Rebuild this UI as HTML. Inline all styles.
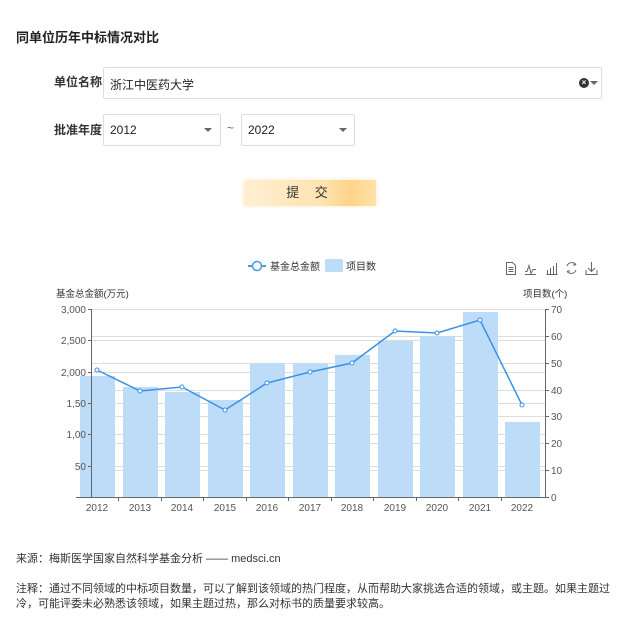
<!DOCTYPE html>
<html><head><meta charset="utf-8">
<style>
*{margin:0;padding:0;box-sizing:border-box}
body{width:623px;height:626px;background:#fff;font-family:"Liberation Sans","Noto Sans CJK SC",sans-serif;color:#333;position:relative;overflow:hidden}
.a{position:absolute}
.box{position:absolute;border:1px solid #ddd;border-radius:2px;background:#fff;font-size:12px;color:#222}
.lbl{position:absolute;font-size:12px;font-weight:bold;color:#333}
.tri{position:absolute;width:0;height:0;border-left:4px solid transparent;border-right:4px solid transparent;border-top:4px solid #666}
</style></head><body>
<div class="a" style="left:16px;top:27px;font-size:13px;font-weight:bold;color:#222">同单位历年中标情况对比</div>

<div class="lbl" style="left:54px;top:73px">单位名称</div>
<div class="box" style="left:103px;top:67px;width:499px;height:32px"><span class="a" style="left:6px;top:8px">浙江中医药大学</span>
<span class="a" style="left:475px;top:10px;width:10px;height:10px;border-radius:50%;background:#333;color:#fff;font-size:8px;line-height:10px;text-align:center;font-weight:bold">×</span>
<span class="tri" style="left:486px;top:13px"></span></div>

<div class="lbl" style="left:54px;top:121px">批准年度</div>
<div class="box" style="left:103px;top:114px;width:118px;height:32px"><span class="a" style="left:6px;top:8px">2012</span><span class="tri" style="left:100px;top:13px"></span></div>
<div class="a" style="left:227px;top:121px;font-size:12px;color:#666">~</div>
<div class="box" style="left:241px;top:114px;width:114px;height:32px"><span class="a" style="left:6px;top:8px">2022</span><span class="tri" style="left:97px;top:13px"></span></div>

<div class="a" style="left:244px;top:180px;width:132px;height:26px;background:linear-gradient(90deg,#ffefd3 0%,#ffe3b0 60%,#ffd48a 80%,#ffe2a8 100%);box-shadow:0 0 4px #ffe9c4;font-size:13px;color:#333;text-align:center;line-height:26px;letter-spacing:6px">提 交</div>

<svg class="a" style="left:0;top:0" width="623" height="626" font-family="Liberation Sans, Noto Sans CJK SC, sans-serif">
<!-- legend -->
<line x1="248" y1="266" x2="266" y2="266" stroke="#4a9ae8" stroke-width="2"/>
<circle cx="257" cy="266" r="4.5" fill="#fff" stroke="#4a9ae8" stroke-width="1.5"/>
<text x="270" y="270" font-size="10" fill="#333">基金总金额</text>
<rect x="325" y="259" width="18" height="13" rx="2" fill="#bddcf7"/>
<text x="346" y="270" font-size="10" fill="#333">项目数</text>
<!-- toolbox -->
<g fill="none" stroke="#666" stroke-width="1">
<path d="M506.5 262.5h6l3 3v9h-9z M508.5 267.5h5 M508.5 269.5h5 M508.5 271.5h5"/>
<path d="M525 271.5h2l2-6 2 8 2-4h3 M525 274.5h11"/>
<path d="M546.5 274.5h11 M547.5 274v-4 M550.5 274v-6 M553.5 274v-8 M556.5 274v-11"/>
<path d="M567 266a5 5 0 0 1 9-1 M576 270a5 5 0 0 1-9 1 M575 263v2h-2 M568 273v-2h2"/>
<path d="M591.5 262v9 M588 268l3.5 3.5 3.5-3.5 M586 270v4.5h11v-4.5"/>
</g>
<text x="56" y="297" font-size="9.5" fill="#333">基金总金额(万元)</text>
<text x="523" y="297" font-size="9.5" fill="#333">项目数(个)</text>
<!-- grid -->
<g stroke="#ddd" stroke-width="1">
<line x1="92" y1="309.5" x2="545" y2="309.5"/><line x1="92" y1="340.5" x2="545" y2="340.5"/><line x1="92" y1="372.5" x2="545" y2="372.5"/><line x1="92" y1="403.5" x2="545" y2="403.5"/><line x1="92" y1="434.5" x2="545" y2="434.5"/><line x1="92" y1="466.5" x2="545" y2="466.5"/>
<line x1="92" y1="336.5" x2="545" y2="336.5"/><line x1="92" y1="363.5" x2="545" y2="363.5"/><line x1="92" y1="390.5" x2="545" y2="390.5"/><line x1="92" y1="416.5" x2="545" y2="416.5"/><line x1="92" y1="443.5" x2="545" y2="443.5"/><line x1="92" y1="470.5" x2="545" y2="470.5"/>
</g>
<!-- bars -->
<g fill="#bddcf7">
<rect x="80" y="376" width="35" height="121"/>
<rect x="123" y="387" width="35" height="110"/>
<rect x="165" y="392" width="35" height="105"/>
<rect x="208" y="400" width="35" height="97"/>
<rect x="250" y="363" width="35" height="134"/>
<rect x="293" y="363" width="35" height="134"/>
<rect x="335" y="355" width="35" height="142"/>
<rect x="378" y="341" width="35" height="156"/>
<rect x="420" y="336" width="35" height="161"/>
<rect x="463" y="312" width="35" height="185"/>
<rect x="505" y="422" width="35" height="75"/>
</g>
<!-- axes -->
<g stroke="#666" stroke-width="1">
<line x1="91.5" y1="309" x2="91.5" y2="497"/>
<line x1="545.5" y1="309" x2="545.5" y2="497"/>
<line x1="76" y1="497.5" x2="545" y2="497.5"/>
<line x1="545" y1="309.5" x2="549" y2="309.5"/><line x1="545" y1="336.5" x2="549" y2="336.5"/><line x1="545" y1="363.5" x2="549" y2="363.5"/><line x1="545" y1="390.5" x2="549" y2="390.5"/><line x1="545" y1="416.5" x2="549" y2="416.5"/><line x1="545" y1="443.5" x2="549" y2="443.5"/><line x1="545" y1="470.5" x2="549" y2="470.5"/><line x1="545" y1="497.5" x2="549" y2="497.5"/>
<line x1="88" y1="309.5" x2="92" y2="309.5"/><line x1="88" y1="340.5" x2="92" y2="340.5"/><line x1="88" y1="372.5" x2="92" y2="372.5"/><line x1="88" y1="403.5" x2="92" y2="403.5"/><line x1="88" y1="434.5" x2="92" y2="434.5"/><line x1="88" y1="466.5" x2="92" y2="466.5"/>
<line x1="118.5" y1="497" x2="118.5" y2="501"/><line x1="161.5" y1="497" x2="161.5" y2="501"/><line x1="203.5" y1="497" x2="203.5" y2="501"/><line x1="246.5" y1="497" x2="246.5" y2="501"/><line x1="288.5" y1="497" x2="288.5" y2="501"/><line x1="331.5" y1="497" x2="331.5" y2="501"/><line x1="373.5" y1="497" x2="373.5" y2="501"/><line x1="416.5" y1="497" x2="416.5" y2="501"/><line x1="458.5" y1="497" x2="458.5" y2="501"/><line x1="501.5" y1="497" x2="501.5" y2="501"/>
</g>
<g font-size="10" fill="#555" text-anchor="end">
<text x="86" y="313">3,000</text><text x="86" y="344">2,500</text><text x="86" y="376">2,000</text><text x="86" y="407">1,50</text><text x="86" y="438">1,00</text><text x="86" y="470">50</text>
</g>
<g font-size="10" fill="#555">
<text x="551" y="313">70</text><text x="551" y="340">60</text><text x="551" y="367">50</text><text x="551" y="394">40</text><text x="551" y="420">30</text><text x="551" y="447">20</text><text x="551" y="474">10</text><text x="551" y="501">0</text>
</g>
<g font-size="10" fill="#555" text-anchor="middle">
<text x="97" y="511">2012</text><text x="140" y="511">2013</text><text x="182" y="511">2014</text><text x="225" y="511">2015</text><text x="267" y="511">2016</text><text x="310" y="511">2017</text><text x="352" y="511">2018</text><text x="395" y="511">2019</text><text x="437" y="511">2020</text><text x="480" y="511">2021</text><text x="522" y="511">2022</text>
</g>
<polyline fill="none" stroke="#3a92e6" stroke-width="1.5" points="97,370 140,391 182,387 225,410 267,383 310,372 352,363 395,331 437,333 480,320 522,405"/>
<g fill="#fff" stroke="#3a92e6" stroke-width="1">
<circle cx="97" cy="370" r="2"/><circle cx="140" cy="391" r="2"/><circle cx="182" cy="387" r="2"/><circle cx="225" cy="410" r="2"/><circle cx="267" cy="383" r="2"/><circle cx="310" cy="372" r="2"/><circle cx="352" cy="363" r="2"/><circle cx="395" cy="331" r="2"/><circle cx="437" cy="333" r="2"/><circle cx="480" cy="320" r="2"/><circle cx="522" cy="405" r="2"/>
</g>
</svg>

<div class="a" style="left:16px;top:550px;font-size:11px;color:#333">来源：梅斯医学国家自然科学基金分析 —— medsci.cn</div>
<div class="a" style="left:16px;top:582px;width:600px;font-size:11px;line-height:15px;color:#333">注释：通过不同领域的中标项目数量，可以了解到该领域的热门程度，从而帮助大家挑选合适的领域，或主题。如果主题过冷，可能评委未必熟悉该领域，如果主题过热，那么对标书的质量要求较高。</div>
</body></html>
